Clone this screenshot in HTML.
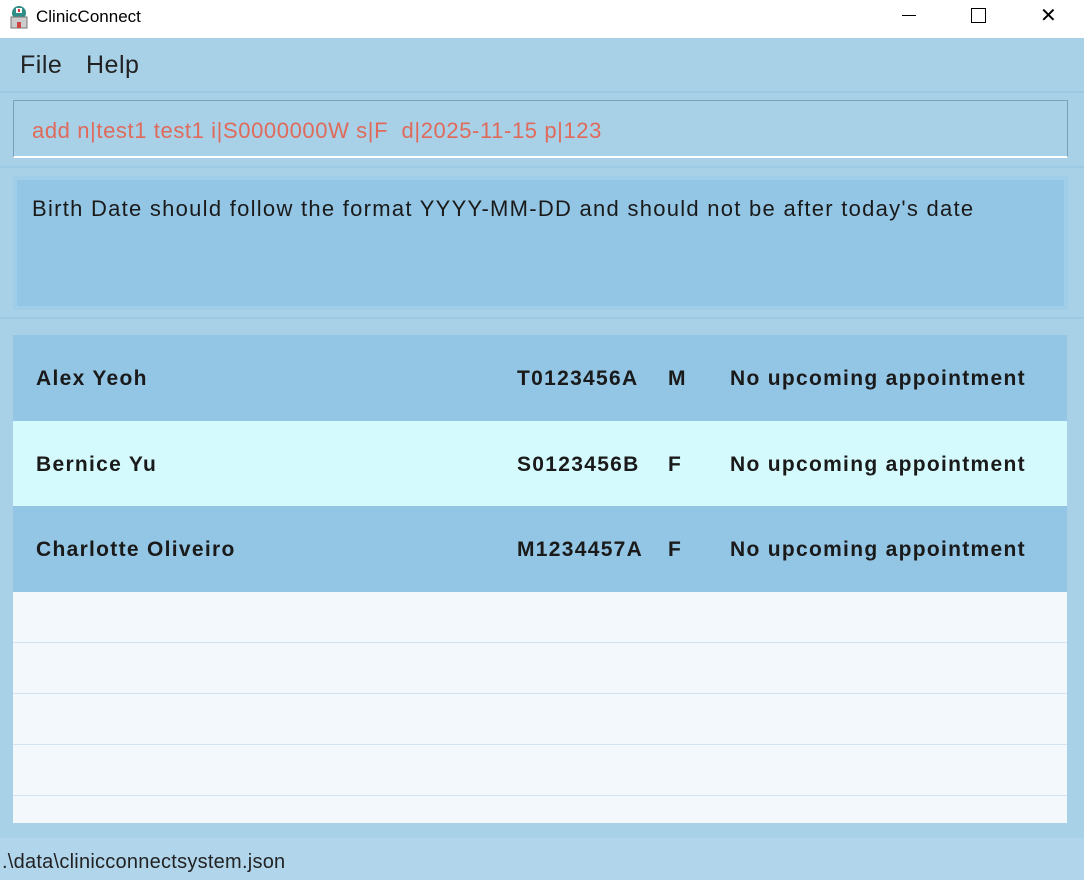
<!DOCTYPE html>
<html><head><style>
*{margin:0;padding:0;box-sizing:border-box}
body{width:1084px;height:880px;background:#a8d1e8;font-family:"Liberation Sans",sans-serif;position:relative;overflow:hidden}
.a{position:absolute}
.title{left:0;top:0;width:1084px;height:38px;background:#fff}
.row{left:13px;width:1054px;height:86px;font-weight:bold;font-size:21px;color:#1a1a1a;letter-spacing:1.3px}
.row span{position:absolute;top:32px}
.e{left:13px;width:1054px;height:51px;background:#f3f8fd;border-bottom:1px solid #d0e4f2}
</style></head><body>
<div class="a title">
 <svg class="a" style="left:8px;top:5px" width="22" height="24" viewBox="0 0 22 24"><circle cx="11" cy="8" r="7" fill="#2f8f86"/><rect x="8" y="3" width="6" height="5" fill="#fff"/><rect x="10" y="4" width="2" height="3" fill="#d33"/><rect x="3" y="12" width="16" height="11" fill="#ccc" stroke="#777"/><rect x="9" y="17" width="4" height="6" fill="#c44"/></svg>
 <div class="a" style="left:36px;top:7px;font-size:17px;color:#000">ClinicConnect</div>
 <div class="a" style="left:902px;top:15px;width:14px;height:1px;background:#000"></div>
 <div class="a" style="left:971px;top:8px;width:15px;height:15px;border:1px solid #000"></div>
 <div class="a" style="left:1040px;top:7px;font-size:20px;line-height:18px;color:#000">✕</div>
</div>
<div class="a" style="left:20px;top:51px;font-size:25px;color:#222;letter-spacing:0.5px">File</div>
<div class="a" style="left:86px;top:51px;font-size:25px;color:#222;letter-spacing:0.5px">Help</div>
<div class="a" style="left:0;top:91px;width:1084px;height:2px;background:#9ec9e2"></div>
<div class="a" style="left:13px;top:100px;width:1055px;height:58px;border:1px solid #7a9fbb;border-bottom:2px solid #fff;background:#a8d1e8"></div>
<div class="a" style="left:32px;top:118px;font-size:22px;color:#e06a5a;letter-spacing:0.6px">add n|test1 test1 i|S0000000W s|F&nbsp; d|2025-11-15 p|123</div>
<div class="a" style="left:0;top:166px;width:1084px;height:2px;background:#9ec9e2"></div>
<div class="a" style="left:13px;top:176px;width:1055px;height:134px;background:#a0cde8"></div>
<div class="a" style="left:17px;top:180px;width:1047px;height:126px;background:#93c5e4"></div>
<div class="a" style="left:32px;top:196px;font-size:22px;color:#1a1a1a;letter-spacing:1.27px">Birth Date should follow the format YYYY-MM-DD and should not be after today's date</div>
<div class="a" style="left:0;top:317px;width:1084px;height:2px;background:#9ec9e2"></div>
<div class="a row" style="top:335px;background:#93c5e4"><span style="left:23px">Alex Yeoh</span><span style="left:504px">T0123456A</span><span style="left:655px">M</span><span style="left:717px">No upcoming appointment</span></div>
<div class="a row" style="top:421px;height:85px;background:#d5fafd"><span style="left:23px">Bernice Yu</span><span style="left:504px">S0123456B</span><span style="left:655px">F</span><span style="left:717px">No upcoming appointment</span></div>
<div class="a row" style="top:506px;background:#93c5e4"><span style="left:23px">Charlotte Oliveiro</span><span style="left:504px">M1234457A</span><span style="left:655px">F</span><span style="left:717px">No upcoming appointment</span></div>
<div class="a e" style="top:592px"></div>
<div class="a e" style="top:643px"></div>
<div class="a e" style="top:694px"></div>
<div class="a e" style="top:745px"></div>
<div class="a e" style="top:796px;height:27px;border:none"></div>
<div class="a" style="left:0;top:838px;width:1084px;height:42px;background:#b1d6ec"></div>
<div class="a" style="left:2px;top:851px;font-size:20px;color:#222;letter-spacing:0.25px">.\data\clinicconnectsystem.json</div>
</body></html>
